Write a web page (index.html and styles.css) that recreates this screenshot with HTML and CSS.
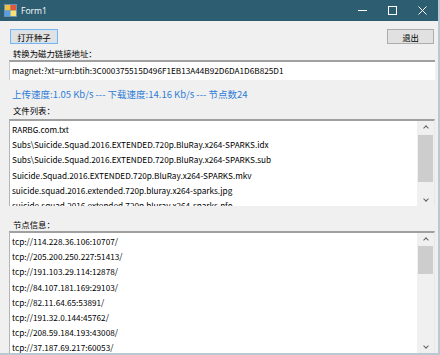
FILE: index.html
```html
<!DOCTYPE html>
<html lang="zh">
<head>
<meta charset="utf-8">
<link rel="stylesheet" href="styles.css">
</head>
<body>
<div class="window">
  <div class="titlebar">
    <svg class="appicon" width="13" height="13" viewBox="0 0 14 14">
      <rect x="0" y="0" width="14" height="14" fill="#6a8fb8"/>
      <rect x="1" y="1" width="6" height="6" fill="#f0c040"/>
      <rect x="7" y="1" width="6" height="6" fill="#e05a3a"/>
      <rect x="1" y="7" width="6" height="6" fill="#58a0e0"/>
      <rect x="7" y="7" width="6" height="6" fill="#f6e27a"/>
    </svg>
    <span class="title">Form1</span>
    <div class="caption-btns">
      <span class="cbtn"><svg width="9" height="9" viewBox="0 0 9 9"><line x1="0" y1="4.5" x2="9" y2="4.5" stroke="#fff" stroke-width="1"/></svg></span>
      <span class="cbtn"><svg width="9" height="9" viewBox="0 0 9 9"><rect x="0.5" y="0.5" width="8" height="8" fill="none" stroke="#fff" stroke-width="1"/></svg></span>
      <span class="cbtn"><svg width="9" height="9" viewBox="0 0 9 9"><path d="M0.5 0.5 L8.5 8.5 M8.5 0.5 L0.5 8.5" stroke="#fff" stroke-width="1"/></svg></span>
    </div>
  </div>
  <div class="client">
    <div class="toprow">
      <button class="btn btn-default">打开种子</button>
      <button class="btn btn-exit">退出</button>
    </div>
    <div class="label lbl1">转换为磁力链接地址：</div>
    <div class="textbox">magnet:?xt=urn:btih:3C000375515D496F1EB13A44B92D6DA1D6B825D1</div>
    <div class="status">上传速度:1.05 Kb/s --- 下载速度:14.16 Kb/s --- 节点数24</div>
    <div class="label lbl2">文件列表：</div>
    <div class="listbox lb1">
      <div class="items">
        <div class="item">RARBG.com.txt</div>
        <div class="item">Subs\Suicide.Squad.2016.EXTENDED.720p.BluRay.x264-SPARKS.idx</div>
        <div class="item">Subs\Suicide.Squad.2016.EXTENDED.720p.BluRay.x264-SPARKS.sub</div>
        <div class="item">Suicide.Squad.2016.EXTENDED.720p.BluRay.x264-SPARKS.mkv</div>
        <div class="item">suicide.squad.2016.extended.720p.bluray.x264-sparks.jpg</div>
        <div class="item">suicide.squad.2016.extended.720p.bluray.x264-sparks.nfo</div>
      </div>
      <div class="scrollbar">
        <span class="arrow up"></span>
        <div class="track"><div class="thumb thumb1"></div></div>
        <span class="arrow down"></span>
      </div>
    </div>
    <div class="label lbl3">节点信息：</div>
    <div class="listbox lb2">
      <div class="items">
        <div class="item">tcp://114.228.36.106:10707/</div>
        <div class="item">tcp://205.200.250.227:51413/</div>
        <div class="item">tcp://191.103.29.114:12878/</div>
        <div class="item">tcp://84.107.181.169:29103/</div>
        <div class="item">tcp://82.11.64.65:53891/</div>
        <div class="item">tcp://191.32.0.144:45762/</div>
        <div class="item">tcp://208.59.184.193:43008/</div>
        <div class="item">tcp://37.187.69.217:60053/</div>
      </div>
      <div class="scrollbar">
        <span class="arrow up"></span>
        <div class="track"><div class="thumb thumb2"></div></div>
        <span class="arrow down"></span>
      </div>
    </div>
  </div>
</div>
</body>
</html>
```
FILE: styles.css
```css
* { box-sizing: border-box; }
html, body { margin: 0; padding: 0; }
body {
  width: 440px;
  height: 355px;
  overflow: hidden;
  font-family: "Noto Sans CJK SC", "Open Sans", sans-serif;
  font-size: 8.2px;
  color: #000;
  background: #f0f0f0;
}
.window {
  width: 440px;
  height: 355px;
  display: flex;
  flex-direction: column;
  border-right: 2px solid #b9c8d2;
  border-bottom: 2px solid #b9c8d2;
  overflow: hidden;
}
.titlebar {
  height: 21px;
  flex: none;
  background: #2d5d70;
  display: flex;
  align-items: center;
  color: #fff;
}
.appicon { margin-left: 4px; flex: none; }
.title {
  margin-left: 4px;
  font-family: "Open Sans", sans-serif;
  font-size: 8.6px;
}
.caption-btns {
  margin-left: auto;
  margin-right: 1px;
  display: flex;
  height: 21px;
}
.cbtn {
  width: 30px;
  height: 21px;
  display: flex;
  align-items: center;
  justify-content: center;
}
.client {
  flex: 1;
  padding: 8px 3px 0 9px;
  display: flex;
  flex-direction: column;
  min-height: 0;
}
.toprow {
  display: flex;
  justify-content: space-between;
  height: 15px;
}
.btn {
  font-family: "Noto Sans CJK SC", sans-serif;
  font-size: 8.4px;
  line-height: 12px;
  padding: 0;
  height: 15px;
  background: #e1e1e1;
  border: 1px solid #adadad;
  color: #000;
}
.btn-default {
  width: 48px;
  margin-left: 1px;
  border: 1px solid #7eb4ea;
  box-shadow: inset 0 0 0 1px #cce4f7;
}
.btn-exit { width: 47px; margin-right: 1px; }
.label {
  padding-left: 4px;
  line-height: 12px;
  height: 12px;
  font-size: 8.4px;
}
.lbl1 { margin-top: 3px; }
.textbox {
  margin-top: 1px;
  height: 20px;
  background: #fff;
  border-top: 2px solid #a0a0a0;
  border-left: 1px solid #c8c8c8;
  padding-left: 2px;
  line-height: 17px;
  white-space: nowrap;
  overflow: hidden;
}
.status {
  margin-top: 8px;
  padding-left: 3px;
  color: #2f7dd6;
  font-size: 9.5px;
  line-height: 12px;
  height: 12px;
}
.lbl2 { margin-top: 4px; }
.listbox {
  display: flex;
  background: #fff;
  border-top: 2px solid #a0a0a0;
  border-left: 1px solid #b4b4b4;
  border-right: 1px solid #e8e8e8;
  overflow: hidden;
}
.lb1 { margin-top: 3px; height: 87px; }
.lbl3 { margin-top: 12px; }
.lb2 { margin-top: 1px; flex: 1; min-height: 0; }
.items {
  flex: 1;
  padding: 1px 0 0 2px;
  overflow: hidden;
}
.item {
  height: 15.2px;
  line-height: 15px;
  white-space: nowrap;
}
.scrollbar {
  width: 17px;
  flex: none;
  background: #f0f0f0;
  display: flex;
  flex-direction: column;
  align-items: center;
}
.arrow {
  height: 12px;
  width: 17px;
  display: flex;
  align-items: center;
  justify-content: center;
  flex: none;
}
.arrow::before {
  content: "";
  width: 3px;
  height: 3px;
  border-left: 1.5px solid #606060;
  border-top: 1.5px solid #606060;
}
.arrow.up::before { transform: translateY(1px) rotate(45deg); }
.arrow.down::before { transform: translateY(-1px) rotate(225deg); }
.track {
  flex: 1;
  width: 17px;
}
.thumb {
  margin: 0 auto;
  width: 15px;
  background: #cdcdcd;
}
.thumb1 { height: 47px; margin-top: 2px; }
.thumb2 { height: 28px; margin-top: 1px; }
```
